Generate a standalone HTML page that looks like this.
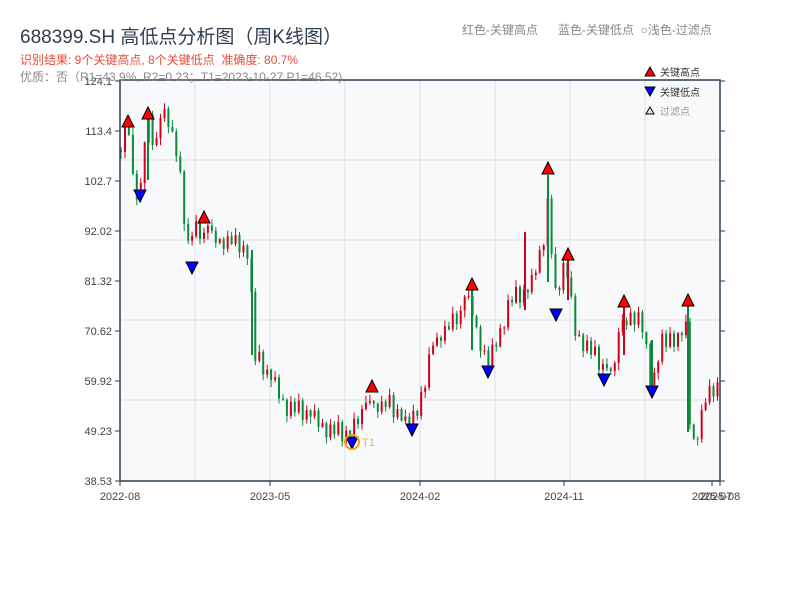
<!DOCTYPE html>
<html><head><meta charset="utf-8"><style>
body{margin:0;width:800px;height:600px;background:#fff;overflow:hidden;font-family:"Liberation Sans","Noto Sans CJK SC",sans-serif;position:relative}
.t{position:absolute;white-space:nowrap}
</style></head><body>
<svg id="s" width="800" height="600" style="position:absolute;left:0;top:0"></svg>
<div class="t" style="left:20px;top:22px;font-size:19px;color:#2c3e50">688399.SH 高低点分析图（周K线图）</div>
<div class="t" style="left:20px;top:51px;font-size:12px;color:#e74c3c">识别结果: 9个关键高点, 8个关键低点&nbsp;&nbsp;准确度: 80.7%</div>
<div class="t" style="left:20px;top:68px;font-size:12px;color:#888">优质：否（R1=43.9%, R2=0.23；T1=2023-10-27 P1=46.52)</div>
<div class="t" style="left:462px;top:21px;font-size:12px;color:#888">红色-关键高点&nbsp;&nbsp;&nbsp;&nbsp;&nbsp;&nbsp;蓝色-关键低点&nbsp;&nbsp;○浅色-过滤点</div>
<script>
(function(){
var s=document.getElementById('s'),h='';
function f(v){return (Math.round(v*10)/10).toString();}
h+='<rect x="120" y="80" width="600" height="401" fill="#f7f9fb"/>';
[160,240,320,400].forEach(function(y){h+='<line x1="120" x2="720" y1="'+y+'" y2="'+y+'" stroke="#dde1e5"/>';});
[195,270,345,420,495,570,645].forEach(function(x){h+='<line y1="80" y2="481" x1="'+x+'" x2="'+x+'" stroke="#dde1e5"/>';});
var K=[[120,150],[127,125],[135,190],[140,195],[147,115],[155,150],[165,110],[175,150],[180,170],[185,225],[190,255],[197,225],[205,235],[230,240],[250,250],[253,355],[262,365],[275,385],[285,405],[310,415],[330,430],[350,435],[362,410],[372,400],[390,405],[412,420],[425,385],[433,340],[450,325],[470,300],[480,340],[488,365],[500,330],[510,300],[530,290],[545,230],[548,200],[555,300],[565,260],[575,330],[590,350],[605,370],[615,355],[625,320],[640,315],[652,385],[660,345],[685,330],[688,320],[690,430],[695,440],[705,400],[720,380]];
function yat(x){for(var i=1;i<K.length;i++){if(x<=K[i][0]){var a=K[i-1],b=K[i];return a[1]+(b[1]-a[1])*(x-a[0])/(b[0]-a[0]);}}return K[K.length-1][1];}
var D="73914826059184736250819374628105937462819053746281937405618293746501928374650192837465019283746591827364509182736450918273645091827364509182736450918273645091827364509182736450918273645";
var cnt=0;function r(){var d=D.charCodeAt(cnt%D.length)-48;cnt++;return d/9;}
var prev=150;
for(var i=0;i<152;i++){var x=121+i*3.95;var c=yat(x)+(r()-0.5)*20;var o=prev;
var lo=Math.min(o,c),hi=Math.max(o,c);var wt=lo-1-r()*6,wb=hi+1+r()*6;
var col=c<o?'#d0021b':'#0a8a3a';
h+='<line x1="'+f(x)+'" x2="'+f(x)+'" y1="'+f(wt)+'" y2="'+f(wb)+'" stroke="'+col+'" stroke-width="1"/>';
h+='<rect x="'+f(x-1)+'" y="'+f(lo)+'" width="2" height="'+f(Math.max(1,hi-lo))+'" fill="'+col+'"/>';
prev=c;}
[[525,232,310,'#d0021b'],[548,175,282,'#0a8a3a'],[688,305,432,'#0a8a3a'],[624,306,355,'#d0021b'],[472,290,350,'#0a8a3a'],[652,340,390,'#0a8a3a'],[252,250,355,'#0a8a3a'],[148,118,180,'#0a8a3a'],[568,260,300,'#d0021b']].forEach(function(w){
h+='<rect x="'+(w[0]-1)+'" y="'+w[1]+'" width="2" height="'+(w[2]-w[1])+'" fill="'+w[3]+'"/>';});
var H=[[128,121],[148,113],[204,217],[372,386],[472,284],[548,168],[568,254],[624,301],[688,300]];
var L=[[140,196],[192,268],[352,443],[412,430],[488,372],[556,315],[604,380],[652,392]];
H.forEach(function(p){h+='<polygon points="'+(p[0]-6)+','+(p[1]+6)+' '+(p[0]+6)+','+(p[1]+6)+' '+p[0]+','+(p[1]-6)+'" fill="#f00" stroke="#000"/>';});
L.forEach(function(p){h+='<polygon points="'+(p[0]-6)+','+(p[1]-6)+' '+(p[0]+6)+','+(p[1]-6)+' '+p[0]+','+(p[1]+6)+'" fill="#00f" stroke="#000"/>';});
h+='<circle cx="352" cy="442" r="7" fill="none" stroke="#f39c12" stroke-width="2"/><text x="362" y="446" font-size="11" fill="#f5b041">T1</text>';
h+='<rect x="120" y="80" width="600" height="401" fill="none" stroke="#2c3e50" stroke-width="1.5"/>';
var yl=[['124.1',81],['113.4',131],['102.7',181],['92.02',231],['81.32',281],['70.62',331],['59.92',381],['49.23',431],['38.53',481]];
yl.forEach(function(a){h+='<line x1="115" x2="120" y1="'+a[1]+'" y2="'+a[1]+'" stroke="#2c3e50"/><line x1="720" x2="725" y1="'+a[1]+'" y2="'+a[1]+'" stroke="#2c3e50"/><text x="112" y="'+(a[1]+4)+'" font-size="11" fill="#444" text-anchor="end">'+a[0]+'</text>';});
[['2022-08',120],['2023-05',270],['2024-02',420],['2024-11',564],['2025-07',712],['2025-08',720]].forEach(function(a){h+='<line x1="'+a[1]+'" x2="'+a[1]+'" y1="481" y2="486" stroke="#2c3e50"/><text x="'+a[1]+'" y="500" font-size="11" fill="#444" text-anchor="middle">'+a[0]+'</text>';});
h+='<polygon points="645,76 655,76 650,67" fill="#f00" stroke="#000"/><text x="660" y="76" font-size="10" fill="#333">关键高点</text>';
h+='<polygon points="645,87 655,87 650,96" fill="#00f" stroke="#000"/><text x="660" y="96" font-size="10" fill="#333">关键低点</text>';
h+='<polygon points="646,114 654,114 650,107" fill="#fdd" stroke="#000"/><text x="660" y="115" font-size="10" fill="#999">过滤点</text>';
s.innerHTML=h;
})();
</script>
</body></html>
